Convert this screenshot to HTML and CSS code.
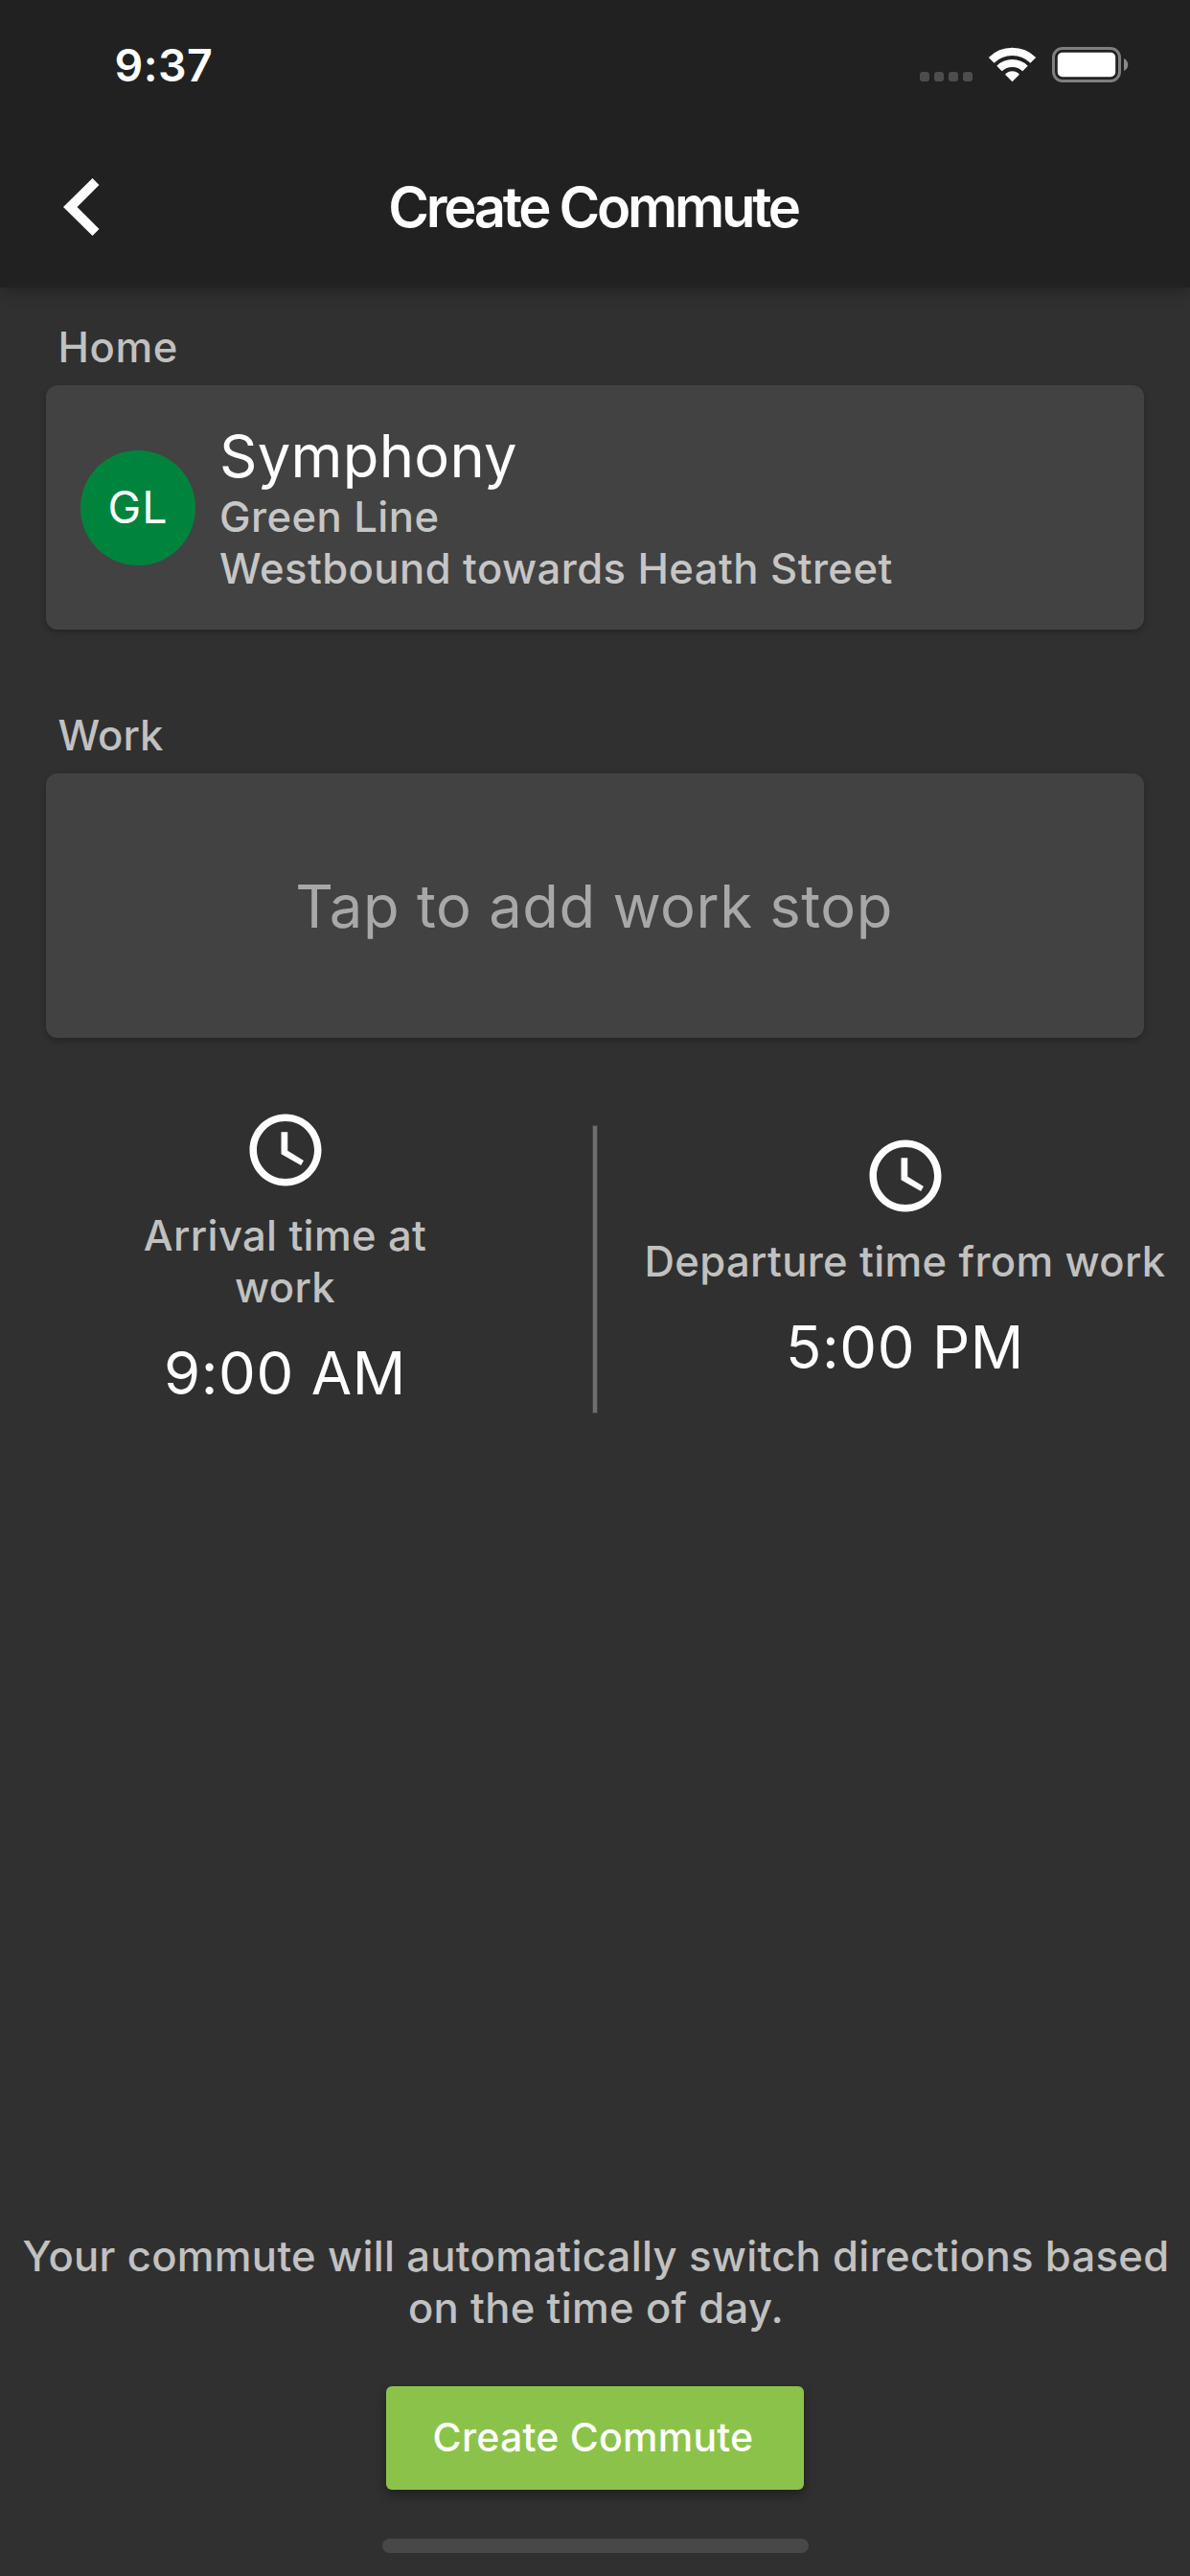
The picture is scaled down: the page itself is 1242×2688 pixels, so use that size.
FILE: index.html
```html
<!DOCTYPE html>
<html lang="en">
<head>
<meta charset="utf-8">
<meta name="viewport" content="width=device-width">
<title>Create Commute</title>
<link rel="stylesheet" href="styles.css">
</head>
<body>
<div class="screen">
  <header class="app-bar">
    <div class="status-bar">
      <span class="clock">9:37</span>
      <svg class="status-icons" viewBox="954 40 228 56" aria-hidden="true">
        <g fill="#4d4d4d">
          <rect x="960" y="75" width="10" height="10" rx="3"/>
          <rect x="975" y="75" width="10" height="10" rx="3"/>
          <rect x="990" y="75" width="10" height="10" rx="3"/>
          <rect x="1005" y="75" width="10" height="10" rx="3"/>
        </g>
        <g fill="none" stroke="#fff">
          <path stroke-width="8.2" d="M1034.7 62.9A31 31 0 0 1 1078.3 62.9"/>
          <path stroke-width="7.8" d="M1043 71.5A19.3 19.3 0 0 1 1070 71.5"/>
        </g>
        <path fill="#fff" d="M1056.5 85.3L1049.3 78Q1049.3 77 1050 76.5A10.5 10.5 0 0 1 1063 76.5Q1063.7 77 1063.7 78Z"/>
        <rect x="1099.5" y="50.5" width="69" height="34" rx="9.5" fill="none" stroke="#7f7f7f" stroke-width="3"/>
        <rect x="1103.8" y="54.8" width="60.4" height="25.4" rx="5" fill="#fff"/>
        <path fill="#8a8a8a" d="M1173 61Q1177.2 63 1177.2 67.5T1173 74Z"/>
      </svg>
    </div>
    <div class="nav-bar">
      <svg class="back" viewBox="0 0 38 60" aria-label="Back"><path fill="#fff" d="M0 30L30.5 0L37.5 7L14.5 30L37.5 53L30.5 60Z"/></svg>
      <h1 class="title">Create Commute</h1>
    </div>
  </header>

  <main class="content">
    <section class="stop">
      <h2 class="label">Home</h2>
      <div class="card card-filled">
        <div class="badge">GL</div>
        <div>
          <div class="stop-name">Symphony</div>
          <div class="stop-detail">Green Line</div>
          <div class="stop-detail">Westbound towards Heath Street</div>
        </div>
      </div>
    </section>

    <section class="stop">
      <h2 class="label label-work">Work</h2>
      <div class="card card-empty">Tap to add work stop</div>
    </section>

    <section class="times">
      <div class="time arrival">
        <svg class="time-icon" viewBox="0 0 24 24" aria-hidden="true"><path fill="#fff" d="M11.99 2C6.47 2 2 6.48 2 12s4.47 10 9.99 10C17.52 22 22 17.52 22 12S17.52 2 11.99 2zM12 20c-4.42 0-8-3.58-8-8s3.58-8 8-8 8 3.58 8 8-3.58 8-8 8zM12.6 7H10.8v6.1l5.5 3.15.75-1.35-4.45-2.7z"/></svg>
        <div class="time-label">Arrival time at work</div>
        <div class="time-value">9:00 AM</div>
      </div>
      <div class="divider"></div>
      <div class="time">
        <svg class="time-icon" viewBox="0 0 24 24" aria-hidden="true"><path fill="#fff" d="M11.99 2C6.47 2 2 6.48 2 12s4.47 10 9.99 10C17.52 22 22 17.52 22 12S17.52 2 11.99 2zM12 20c-4.42 0-8-3.58-8-8s3.58-8 8-8 8 3.58 8 8-3.58 8-8 8zM12.6 7H10.8v6.1l5.5 3.15.75-1.35-4.45-2.7z"/></svg>
        <div class="time-label">Departure time from work</div>
        <div class="time-value">5:00 PM</div>
      </div>
    </section>
  </main>

  <footer class="footer">
    <p class="hint">Your commute will automatically switch directions based on the time of day.</p>
    <button class="create" type="button">Create Commute</button>
    <div class="home-indicator"></div>
  </footer>
</div>
</body>
</html>
```
FILE: styles.css
```css
* { box-sizing: border-box; }

body {
  margin: 0;
  background: #303030;
  font-family: Inter, "Liberation Sans", sans-serif;
  color: #fff;
}

.screen {
  display: flex;
  flex-direction: column;
  width: 1242px;
  height: 2688px;
  overflow: hidden;
}

/* App bar */
.app-bar {
  height: 300px;
  background: #212121;
  box-shadow: 0 4px 15px rgba(0, 0, 0, .28);
}
.status-bar {
  display: flex;
  justify-content: space-between;
  height: 132px;
  padding: 40px 60px 0 119.5px;
}
.clock {
  font-size: 46.5px;
  font-weight: 600;
  line-height: 56px;
  letter-spacing: .45px;
}
.status-icons { width: 228px; height: 56px; }
.nav-bar {
  display: grid;
  grid-template-columns: 38px 1fr 38px;
  align-items: center;
  height: 168px;
  padding: 0 66px;
}
.back { width: 38px; height: 60px; }
.title {
  margin: 0;
  padding-right: 4px;
  text-align: center;
  font-size: 58px;
  font-weight: 600;
  line-height: 72px;
  letter-spacing: -3.3px;
}

/* Stops */
.content { flex: 1; padding-top: 36px; }
.stop { padding: 0 48px; }
.stop + .stop { margin-top: 84px; }
.label {
  margin: 0 0 12px;
  padding-left: 12.5px;
  color: #c1c1c1;
  font-size: 43.6px;
  font-weight: 500;
  line-height: 54px;
  letter-spacing: .6px;
}
.label-work { letter-spacing: .03px; }
.card {
  display: flex;
  align-items: center;
  border-radius: 12px;
  background: #424242;
  box-shadow: 0 3px 6px rgba(0, 0, 0, .24);
}
.card-filled { gap: 25px; height: 255px; padding: 0 36px; }
.card-empty {
  justify-content: center;
  height: 276px;
  padding-right: 2px;
  color: #a8a8a8;
  font-size: 61.5px;
  line-height: 75px;
  letter-spacing: .52px;
}
.badge {
  display: flex;
  align-items: center;
  justify-content: center;
  flex: none;
  width: 120px;
  height: 120px;
  padding-bottom: 2px;
  border-radius: 50%;
  background: #00843d;
  font-size: 46.5px;
  line-height: 56px;
  letter-spacing: .9px;
}
.stop-name {
  font-size: 61.5px;
  line-height: 75px;
  letter-spacing: .27px;
}
.stop-detail {
  color: #c6c6c6;
  font-size: 43.6px;
  font-weight: 500;
  line-height: 54px;
  letter-spacing: .43px;
}

/* Times */
.times {
  display: grid;
  grid-template-columns: 595px 6px 595px;
  justify-content: space-between;
  align-items: center;
  padding-top: 72px;
}
.time {
  display: flex;
  flex-direction: column;
  align-items: center;
  padding-bottom: 24px;
  text-align: center;
}
.time-icon { width: 90px; height: 90px; margin-bottom: 18px; }
.time-label {
  margin-bottom: 24px;
  color: #c1c1c1;
  font-size: 43.6px;
  font-weight: 500;
  line-height: 54px;
  letter-spacing: .35px;
}
.arrival .time-label { width: 360px; }
.time-value {
  font-size: 61.5px;
  line-height: 75px;
  letter-spacing: .6px;
}
.divider {
  height: 301px;
  border: 1px solid #414141;
  background: #6f6f6f;
}

/* Footer */
.footer {
  display: flex;
  flex-direction: column;
  align-items: center;
  padding-bottom: 24px;
}
.hint {
  margin: 0 0 54px;
  padding: 0 18px 0 20px;
  color: #c1c1c1;
  text-align: center;
  font-size: 43.6px;
  font-weight: 500;
  line-height: 54px;
  letter-spacing: .31px;
}
.create {
  width: 436px;
  height: 108px;
  margin-bottom: 51px;
  padding: 0 4px 2px 0;
  border: 0;
  border-radius: 6px;
  background: #8bc34a;
  box-shadow: 0 6px 12px rgba(0, 0, 0, .32);
  color: #fff;
  font-family: inherit;
  font-size: 41px;
  font-weight: 500;
  letter-spacing: .24px;
}
.home-indicator {
  width: 445px;
  height: 15px;
  border-radius: 8px;
  background: #484848;
}
```
